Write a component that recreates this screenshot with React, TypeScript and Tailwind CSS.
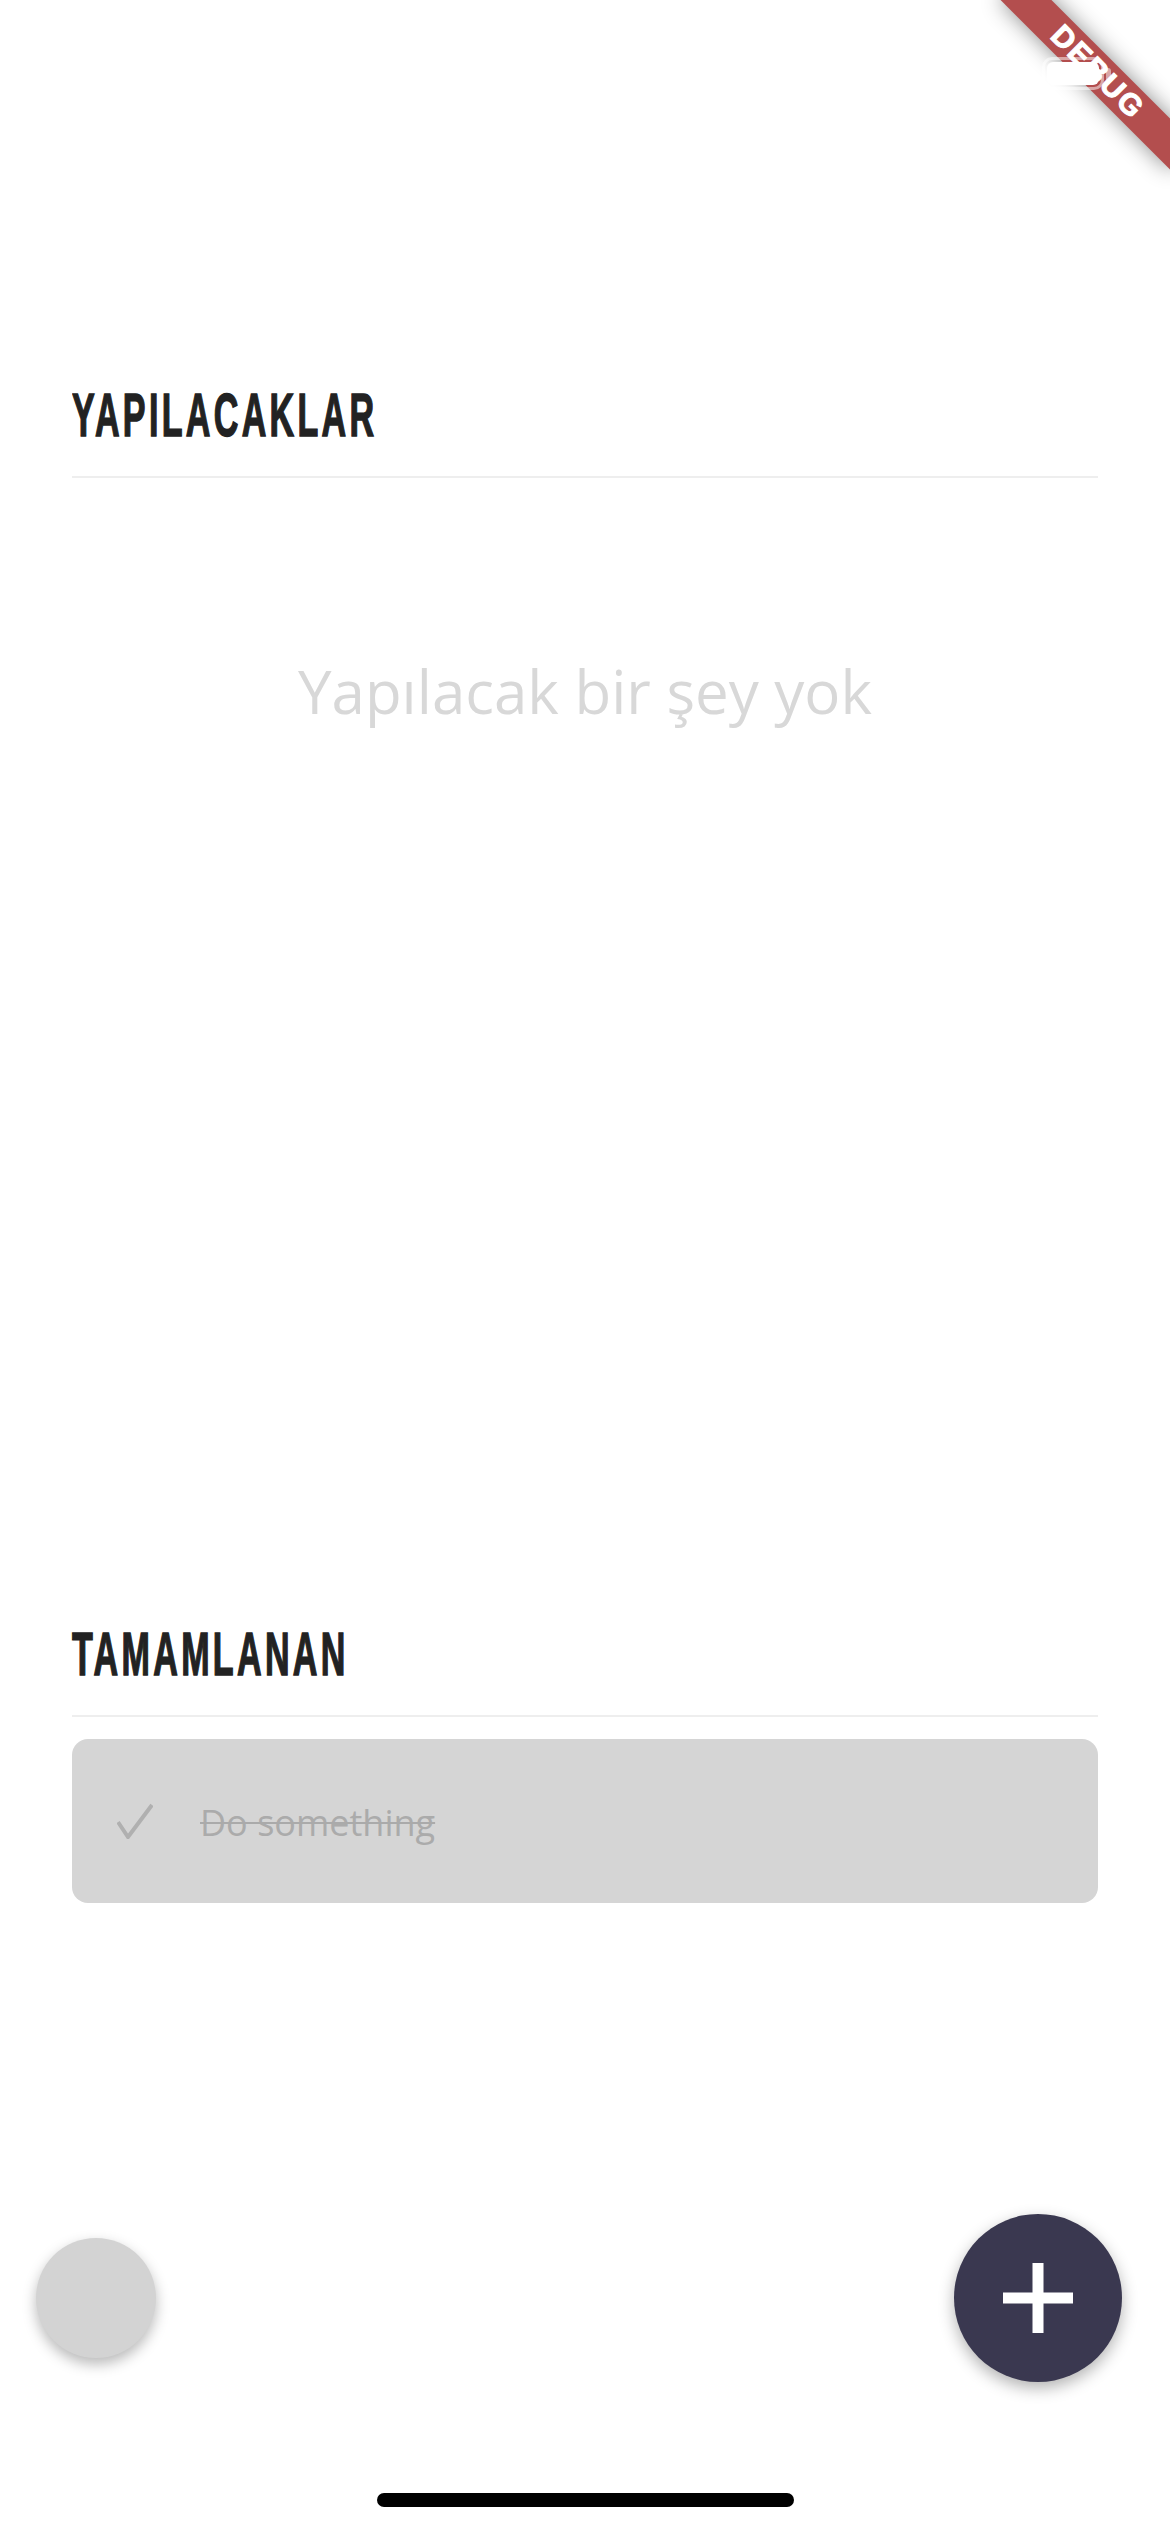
import React from "react";

function Heading({ children }: { children: React.ReactNode }) {
  return (
    <div className="h-[62px] leading-none whitespace-nowrap">
      <span className="inline-block origin-left scale-x-[0.55] font-['Liberation_Sans',Arial,sans-serif] text-[62px] font-bold leading-none tracking-[6px] text-[#222222] [-webkit-text-stroke:1.5px_#222222]">
        {children}
      </span>
    </div>
  );
}

export default function App() {
  return (
    <div className="relative h-[2532px] w-[1170px] overflow-hidden bg-white font-['Open_Sans',sans-serif]">
      <div className="flex flex-col px-[72px] pt-[384px]">
        <Heading>YAPILACAKLAR</Heading>
        <div className="mt-[30px] h-[2px] bg-[#eeeeee]" />
        <p className="mt-[183px] text-center text-[60px] leading-none text-[#d8d8d8]">
          Yapılacak bir şey yok
        </p>

        <div className="mt-[902px]">
          <Heading>TAMAMLANAN</Heading>
        </div>
        <div className="mt-[30px] h-[2px] bg-[#eeeeee]" />
        <div className="mt-[22px] flex h-[164px] items-center rounded-[16px] bg-[#d5d5d5] pl-[45px]">
          <svg width="36" height="36" viewBox="0 0 36 36" fill="none">
            <polyline
              points="1,19 11,34 35,2"
              stroke="#b0b0b0"
              strokeWidth="4"
              strokeLinejoin="miter"
            />
          </svg>
          <span className="ml-[47px] mt-[3px] text-[36px] leading-none text-[#ababab] line-through decoration-[#aaaaaa] decoration-2">
            Do something
          </span>
        </div>
      </div>

      {/* Left floating circle */}
      <div className="absolute left-[36px] top-[2238px] h-[120px] w-[120px] rounded-full bg-[#d3d3d3] shadow-[0_6px_14px_rgba(0,0,0,0.28)]" />

      {/* FAB */}
      <div className="absolute left-[954px] top-[2214px] flex h-[168px] w-[168px] items-center justify-center rounded-full bg-[#3a3850] shadow-[0_6px_16px_rgba(0,0,0,0.3)]">
        <svg width="70" height="70" viewBox="0 0 70 70">
          <rect x="29.5" y="0" width="11" height="70" fill="white" />
          <rect x="0" y="29.5" width="70" height="11" fill="white" />
        </svg>
      </div>

      {/* Home indicator */}
      <div className="absolute left-[377px] top-[2493px] h-[14px] w-[417px] rounded-full bg-black" />

      {/* Debug banner */}
      <div className="absolute left-[978px] top-[54px] flex h-[36px] w-[240px] rotate-45 items-center justify-center bg-[#b34e4e] shadow-[0_0_22px_rgba(0,0,0,0.45)]">
        <span className="font-['Liberation_Sans',Arial,sans-serif] text-[30px] font-black leading-none tracking-[2px] text-white [-webkit-text-stroke:1px_white]">
          DEBUG
        </span>
      </div>

      {/* Battery (status bar, white) */}
      <div className="absolute left-[1042px] top-[57px] h-[33px] w-[62px] rounded-[10px] border-[3px] border-white/50" />
      <div className="absolute left-[1047px] top-[62px] h-[23px] w-[52px] rounded-[6px] bg-white" />
      <div className="absolute left-[1106px] top-[68px] h-[12px] w-[5px] rounded-r-[3px] bg-white/50" />
    </div>
  );
}
